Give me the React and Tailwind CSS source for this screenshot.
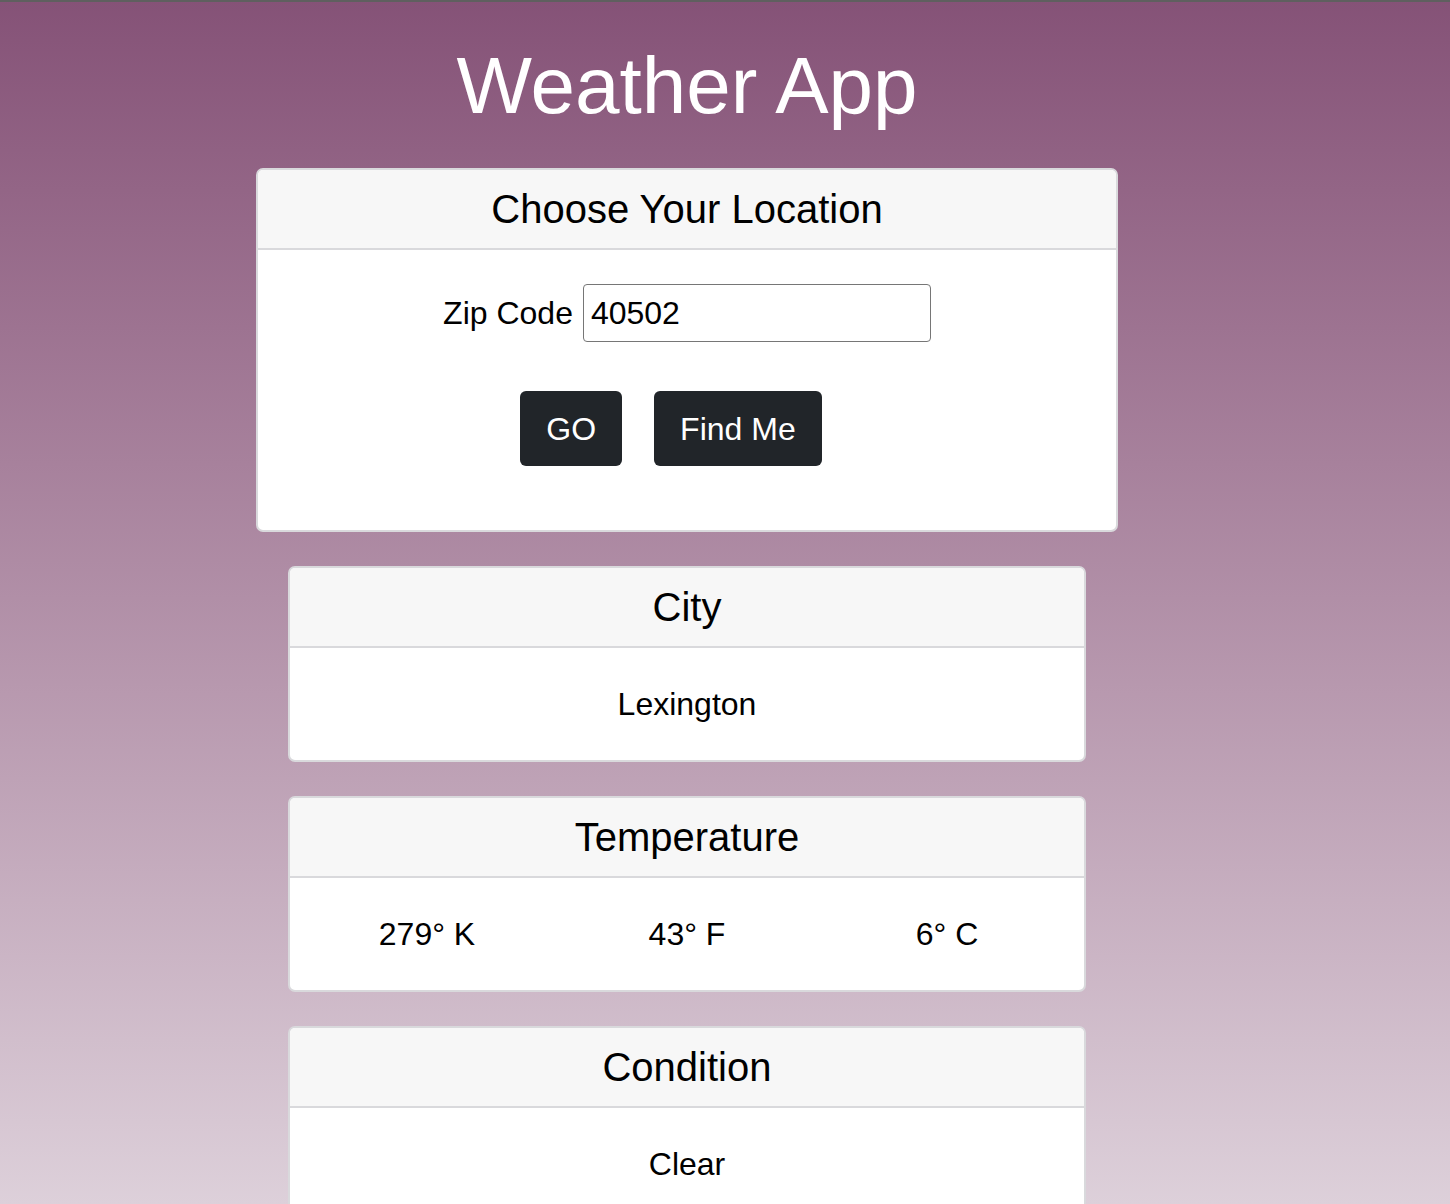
import React, { useState } from 'react';

const Card = ({ title, width, children }) => (
  <div
    className={`${width} mx-auto bg-white border-2 border-[#d9d9dc] rounded-[7px] overflow-hidden`}
  >
    <div className="h-[80px] flex items-center justify-center bg-[#f7f7f7] border-b-2 border-[#d9d9dc] text-[40px] leading-none text-black">
      {title}
    </div>
    {children}
  </div>
);

const WeatherApp = () => {
  const [zip, setZip] = useState('40502');
  const temp = { k: 279, f: 43, c: 6 };

  return (
    <div
      className="min-h-screen w-full border-t-2 border-[#5f5f5f] bg-fixed bg-gradient-to-b from-[#855277] to-[#ddd0da] overflow-hidden"
      style={{ fontFamily: '"Liberation Sans", Arial, sans-serif' }}
    >
      <div className="w-[1374px] pt-[36px]">
        <h1 className="text-center text-white text-[80px] leading-[96px] mb-[34px]">Weather App</h1>

        <div className="flex flex-col gap-[34px]">
          <Card title="Choose Your Location" width="w-[862px]">
            <div className="h-[280px] pt-[34px] flex flex-col items-center">
              <div className="flex items-center gap-[10px]">
                <label className="text-[32px] text-black leading-none">Zip Code</label>
                <input
                  value={zip}
                  onChange={e => setZip(e.target.value)}
                  className="w-[348px] h-[58px] border-[1.5px] border-[#767676] rounded-[4px] px-[7px] text-[32px] text-black outline-none"
                />
              </div>
              {/* each button carries a right margin, so the pair sits a bit left of centre */}
              <div className="flex mt-[49px]">
                <button className="h-[75px] px-[26px] mr-[32px] bg-[#212529] text-white text-[32px] rounded-[6px]">
                  GO
                </button>
                <button className="h-[75px] px-[26px] mr-[32px] bg-[#212529] text-white text-[32px] rounded-[6px]">
                  Find Me
                </button>
              </div>
            </div>
          </Card>

          <Card title="City" width="w-[798px]">
            <div className="h-[112px] flex items-center justify-center text-[32px] text-black">Lexington</div>
          </Card>

          <Card title="Temperature" width="w-[798px]">
            <div className="h-[112px] w-[780px] mx-auto grid grid-cols-3 items-center text-center text-[32px] text-black">
              <div>{temp.k}° K</div>
              <div>{temp.f}° F</div>
              <div>{temp.c}° C</div>
            </div>
          </Card>

          <Card title="Condition" width="w-[798px]">
            <div className="h-[112px] flex items-center justify-center text-[32px] text-black">Clear</div>
          </Card>
        </div>
        <div className="h-[40px]" />
      </div>
    </div>
  );
};

export default WeatherApp;
